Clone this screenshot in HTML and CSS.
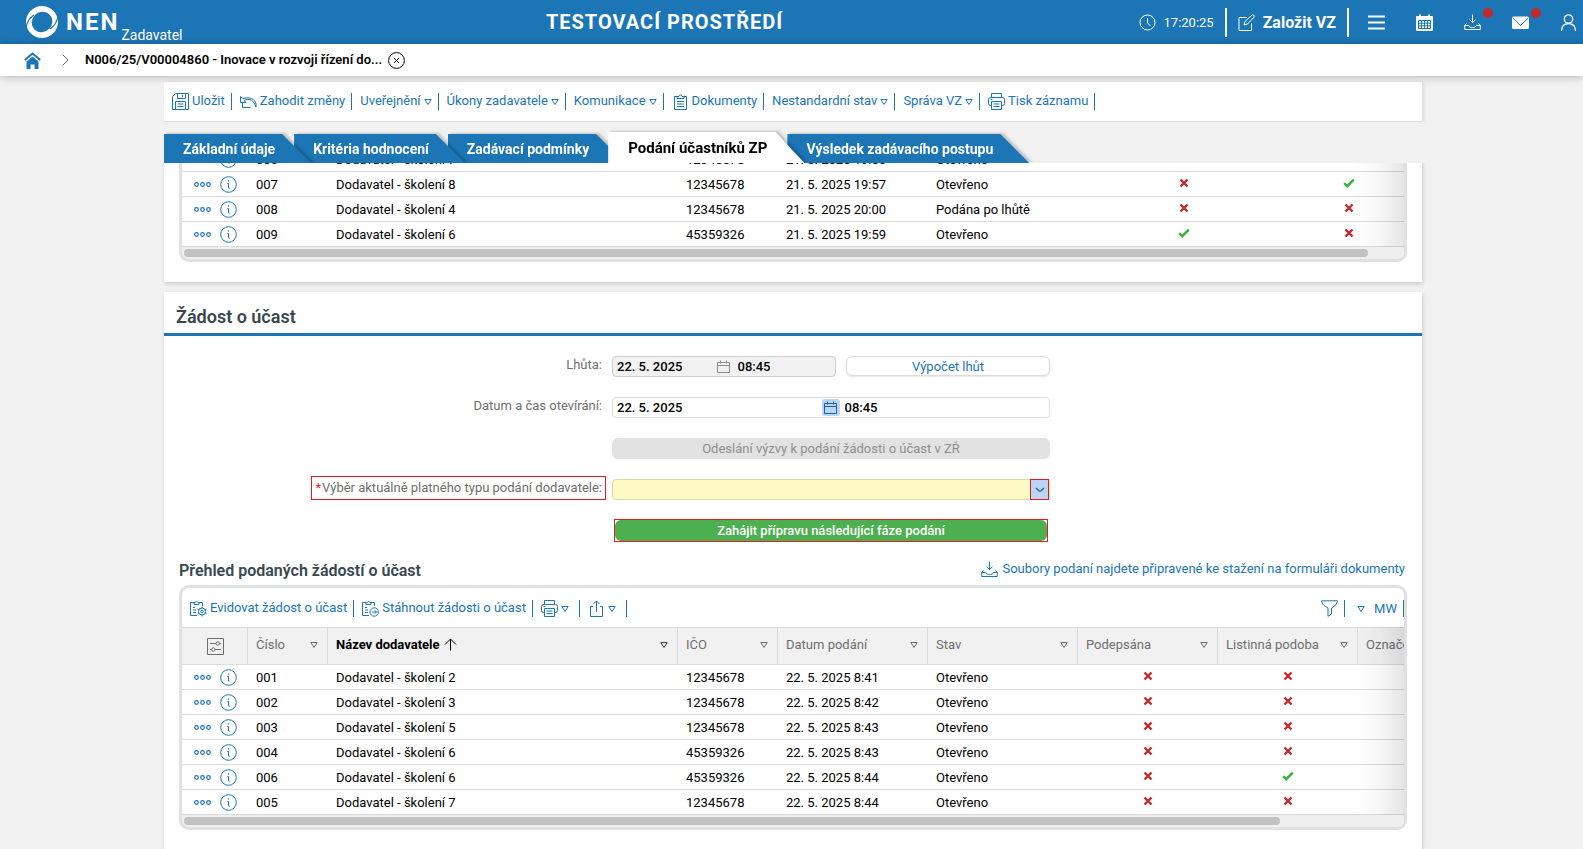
FILE: index.html
```html
<!DOCTYPE html>
<html lang="cs">
<head>
  <meta charset="UTF-8" />
  <meta name="viewport" content="width=device-width, initial-scale=1.0"/>
  <title>NEN Zadavatel</title>
  <link rel="stylesheet" href="styles.css">
</head>
<body>
  <!-- icons -->
  <svg class="sprite" width="0" height="0" aria-hidden="true">
    <symbol id="i-save" viewBox="0 0 17 17"><path d="M3.500.5h13v16H.5v-13zM5.500.5v5h8v-5M10.500 2v2M3.500 16.500v-8h10v8M5.500 11h6M5.500 13.500h6"/></symbol>
    <symbol id="i-undo" viewBox="0 0 17 17"><path d="M.5 3.500v6H6L4 7.500C9.500 4.500 14 7.500 16 14c1-6-4-11-13-8.500L.5 3.500zM2.500 9.500v5h8"/></symbol>
    <symbol id="i-clip" viewBox="0 0 17 17"><path d="M5 3.500H2.500v13h12v-13H12M5 5.500v-2h2a1.500 1.500 0 0 1 3 0h2v2zM5 8.500h7M5 11h7M5 13.500h7"/></symbol>
    <symbol id="i-print" viewBox="0 0 17 17"><path d="M3.500 4.500v-4h10v4M3.500 12.500h-1a2 2 0 0 1-2-2v-4a2 2 0 0 1 2-2h12a2 2 0 0 1 2 2v4a2 2 0 0 1-2 2h-1M3.500 8.500h10v8h-10zM5.500 11h6M5.500 13.500h6M2.500 6.500h2"/></symbol>
    <symbol id="i-tri" viewBox="0 0 8 8"><path d="M.8 1.500h6.400L4 6.500z"/></symbol>
    <symbol id="i-clipgear" viewBox="0 0 17 17"><path d="M7 15.500H.5v-13H4M9 2.500h3.500V6M4 4.500v-2h1.200a1.500 1.500 0 0 1 2.800 0h1v2zM3 7.500h2M3 10h3M3 12.500h3"/><circle cx="12" cy="11.500" r="3.500"/><circle cx="12" cy="11.500" r="1.300"/><path d="M12 6.500v1.500M12 15v1.500M7.500 9l1.500 1M15 13l1.500 1M7.500 14l1.500-1M15 10l1.500-1"/></symbol>
    <symbol id="i-cliparrow" viewBox="0 0 17 17"><path d="M7 15.500H.5v-13H4M9 2.500h3.500V6M4 4.500v-2h1.200a1.500 1.500 0 0 1 2.800 0h1v2zM3 7.500h2M3 10h3M3 12.500h3"/><circle cx="12.200" cy="12" r="4.200"/><path d="M10 12h4.500M12.800 10.200l1.800 1.800-1.800 1.800"/></symbol>
    <symbol id="i-share" viewBox="0 0 17 17"><path d="M5 6.500H2.500v10h12v-10H12M8.500 12V1M5.500 4l3-3 3 3"/></symbol>
    <symbol id="i-inbox" viewBox="0 0 17 17"><path d="M8.500.5v8M5.500 5.700l3 2.800 3-2.800M2.500 9.500L.7 11.500v4h15.600v-4l-1.800-2M.7 11.500h4c.5 2.700 7.100 2.700 7.600 0h4"/></symbol>
    <symbol id="i-funnel" viewBox="0 0 17 17"><path d="M.7.8h15.600c0 3-2 5-5.800 7.200v6L7 16.300V8C3.200 6 .7 4 .7.800z"/></symbol>
    <symbol id="i-cal" viewBox="0 0 13 13"><path d="M.5 2.500h12v10H.5zM.5 5.500h12M3.500.5v3M9.500.5v3"/></symbol>
    <symbol id="i-dots" viewBox="0 0 17 17"><g stroke-width="1.200"><circle cx="2.500" cy="8.500" r="1.800"/><circle cx="8.500" cy="8.500" r="1.800"/><circle cx="14.500" cy="8.500" r="1.800"/></g></symbol>
    <symbol id="i-info" viewBox="0 0 17 17"><circle cx="8.500" cy="8.500" r="7.800"/><path d="M8.500 4.300v1.200M7.300 7.500h1.200v4.300c0 .4.300.6 1.300.4"/></symbol>
    <symbol id="i-no" viewBox="0 0 10 10"><path d="M1.500 1.500l7 7M8.500 1.500l-7 7"/></symbol>
    <symbol id="i-yes" viewBox="0 0 12 10"><path d="M1.200 5.200l3 3L10.800 1.600"/></symbol>
    <symbol id="i-cols" viewBox="0 0 17 17"><path d="M.5.5h16v16H.5zM3 5.500h6M12.500 5.500H14M3 11.500h1.500M8 11.500h6"/><circle cx="10.800" cy="5.500" r="1.700"/><circle cx="6.300" cy="11.500" r="1.700"/></symbol>
    <symbol id="i-up" viewBox="0 0 13 13"><path d="M6.500 12.500V1M1 6.500L6.500 1 12 6.500"/></symbol>
  </svg>

  <header class="topbar">
    <a class="logo" href="#">
      <svg width="32" height="32" viewBox="0 0 32 32"><path fill="#fff" fill-rule="evenodd" d="M16 0a16 16 0 1 0 0 32 16 16 0 0 0 0-32zM23.500 8.500A10.600 10 -45 0 1 8.500 23.500 10.600 10 -45 0 1 23.500 8.500z"/><path fill="none" stroke="#1c75b4" stroke-width="1.200" d="M0 21.500c1-5 3.500-9.500 8-12.500M32 10.500c-1 5-3.500 9.500-8 12.500"/></svg>
      <span class="logo-name">NEN</span><span class="logo-role">Zadavatel</span>
    </a>
    <div class="env">TESTOVACÍ PROSTŘEDÍ</div>
    <div class="top-tools">
      <div class="clock">
        <svg width="17" height="17" viewBox="0 0 17 17"><circle cx="8.500" cy="8.500" r="7.500"/><path d="M8.500 4v5l3 3"/></svg>
        <span>17:20:25</span>
      </div>
      <a class="create" href="#">
        <svg width="17" height="17" viewBox="0 0 17 17"><path d="M9 3.500H1v13h12.500V9M6 11l1-3.500 7-6.500c1-.8 3 1 2 2.200L9.500 10z"/></svg>
        Založit VZ
      </a>
      <button class="top-btn" aria-label="Menu"><svg width="17" height="17" viewBox="0 0 17 17"><path stroke-width="2.200" d="M0 2.500h17M0 8.500h17M0 14.500h17"/></svg></button>
      <button class="top-btn" aria-label="Kalendář"><svg width="17" height="17" viewBox="0 0 17 17"><path fill="#fff" stroke="none" d="M1 2h2V.500h2V2h7V.500h2V2h2a1 1 0 0 1 1 1v13a1 1 0 0 1-1 1H1a1 1 0 0 1-1-1V3a1 1 0 0 1 1-1z"/><path stroke="#1c75b4" stroke-width="1" d="M2.500 6.500h12v8h-12zM5.500 6.500v8M8.500 6.500v8M11.500 6.500v8M2.500 9.200h12M2.500 11.800h12"/></svg></button>
      <button class="top-btn" aria-label="Stažené"><svg width="17" height="17"><use href="#i-inbox"/></svg><span class="badge"></span></button>
      <button class="top-btn" aria-label="Zprávy"><svg width="17" height="17" viewBox="0 0 17 17"><rect y="2.500" width="17" height="12.500" rx="1.500" fill="#fff" stroke="none"/><path stroke="#1c75b4" stroke-width="1" d="M.8 4l7.700 7.500L16.200 4"/></svg><span class="badge"></span></button>
      <button class="top-btn" aria-label="Uživatel"><svg width="17" height="17" viewBox="0 0 17 17"><g stroke-width="1.300"><circle cx="8.500" cy="5" r="4.200"/><path d="M1.500 17c0-5 2.500-7.300 7-7.300s7 2.300 7 7.300"/></g></svg></button>
    </div>
  </header>

  <nav class="crumbs">
    <a class="home" href="#" aria-label="Domů"><svg width="17" height="17" viewBox="0 0 17 17"><path fill="none" stroke="#1c75b4" stroke-width="2" d="M.8 8L8.500 1.500 16.200 8"/><path fill="#1c75b4" d="M8.500 4.500L14.500 9.500V17h-4v-4.500h-4V17h-4V9.500z"/></svg></a>
    <svg class="sep" width="7" height="12" viewBox="0 0 7 12"><path d="M.7.7L6 6 .7 11.300"/></svg>
    <a class="crumb" href="#">N006/25/V00004860 - Inovace v rozvoji řízení do...</a>
    <button class="crumb-close" aria-label="Zavřít"><svg width="17" height="17" viewBox="0 0 17 17"><circle cx="8.500" cy="8.500" r="7.900"/><path d="M6 6l5 5M11 6l-5 5"/></svg></button>
  </nav>

  <main>
    <div class="toolbar main-toolbar">
      <button><svg width="17" height="17"><use href="#i-save"/></svg>Uložit</button>
      <button><svg width="17" height="17"><use href="#i-undo"/></svg>Zahodit změny</button>
      <button>Uveřejnění<svg width="8" height="8"><use href="#i-tri"/></svg></button>
      <button>Úkony zadavatele<svg width="8" height="8"><use href="#i-tri"/></svg></button>
      <button>Komunikace<svg width="8" height="8"><use href="#i-tri"/></svg></button>
      <button><svg width="17" height="17"><use href="#i-clip"/></svg>Dokumenty</button>
      <button>Nestandardní stav<svg width="8" height="8"><use href="#i-tri"/></svg></button>
      <button>Správa VZ<svg width="8" height="8"><use href="#i-tri"/></svg></button>
      <button><svg width="17" height="17"><use href="#i-print"/></svg>Tisk záznamu</button>
    </div>

    <nav class="tabs">
      <a class="tab t1" href="#">Základní údaje</a>
      <a class="tab t2" href="#">Kritéria hodnocení</a>
      <a class="tab t3" href="#">Zadávací podmínky</a>
      <a class="tab active" href="#">Podání účastníků ZP</a>
      <a class="tab t5" href="#">Výsledek zadávacího postupu</a>
    </nav>

    <section class="panel panel-prev">
      <div class="grid-box">
        <div class="grid-body">
          <table class="grid">
            <colgroup><col class="c-act"><col class="c-num"><col class="c-name"><col class="c-ico"><col class="c-date"><col class="c-state-wide"><col class="c-flag-wide"><col class="c-flag-wide"></colgroup>
            <tbody>
              <tr><td class="act"><svg width="17" height="17"><use href="#i-dots"/></svg><svg width="17" height="17"><use href="#i-info"/></svg></td><td>006</td><td>Dodavatel - školení 7</td><td>12345678</td><td>21. 5. 2025 19:56</td><td>Otevřeno</td><td class="flag"></td><td class="flag"></td></tr>
              <tr><td class="act"><svg width="17" height="17"><use href="#i-dots"/></svg><svg width="17" height="17"><use href="#i-info"/></svg></td><td>007</td><td>Dodavatel - školení 8</td><td>12345678</td><td>21. 5. 2025 19:57</td><td>Otevřeno</td><td class="flag"><svg class="no"><use href="#i-no"/></svg></td><td class="flag"><svg class="yes"><use href="#i-yes"/></svg></td></tr>
              <tr><td class="act"><svg width="17" height="17"><use href="#i-dots"/></svg><svg width="17" height="17"><use href="#i-info"/></svg></td><td>008</td><td>Dodavatel - školení 4</td><td>12345678</td><td>21. 5. 2025 20:00</td><td>Podána po lhůtě</td><td class="flag"><svg class="no"><use href="#i-no"/></svg></td><td class="flag"><svg class="no"><use href="#i-no"/></svg></td></tr>
              <tr><td class="act"><svg width="17" height="17"><use href="#i-dots"/></svg><svg width="17" height="17"><use href="#i-info"/></svg></td><td>009</td><td>Dodavatel - školení 6</td><td>45359326</td><td>21. 5. 2025 19:59</td><td>Otevřeno</td><td class="flag"><svg class="yes"><use href="#i-yes"/></svg></td><td class="flag"><svg class="no"><use href="#i-no"/></svg></td></tr>
            </tbody>
          </table>
        </div>
        <div class="hscroll"><div class="thumb" style="width: 97.2%"></div></div>
      </div>
    </section>

    <section class="panel panel-req">
      <h2>Žádost o účast</h2>

      <form class="form">
        <label for="lhuta">Lhůta:</label>
        <div class="pair">
          <div class="field readonly">
            <input type="text" id="lhuta" value="22. 5. 2025" readonly>
            <button type="button" class="cal" aria-label="Kalendář"><svg width="13" height="13"><use href="#i-cal"/></svg></button>
            <input type="text" aria-label="Lhůta čas" value="08:45" readonly>
          </div>
          <button type="button" class="btn">Výpočet lhůt</button>
        </div>

        <label for="otevirani">Datum a čas otevírání:</label>
        <div class="field">
          <input type="text" id="otevirani" value="22. 5. 2025">
          <button type="button" class="cal cal-on" aria-label="Kalendář"><svg width="13" height="13"><use href="#i-cal"/></svg></button>
          <input type="text" aria-label="Čas otevírání" value="08:45">
        </div>

        <button type="button" class="btn btn-off" disabled>Odeslání výzvy k podání žádosti o účast v ZŘ</button>

        <label for="typ" class="marked"><span class="req">*</span>Výběr aktuálně platného typu podání dodavatele:</label>
        <div class="select">
          <select id="typ"><option value=""></option></select>
          <span class="arrow"><svg width="10" height="6" viewBox="0 0 10 6"><path stroke-width="1.300" d="M1 1l3 2.800q1 .8 2 0L9 1"/></svg></span>
        </div>

        <div class="go"><button type="button" class="btn-go">Zahájit přípravu následující fáze podání</button></div>
      </form>

      <div class="grid-head">
        <h3>Přehled podaných žádostí o účast</h3>
        <a href="#"><svg width="17" height="17"><use href="#i-inbox"/></svg>Soubory podaní najdete připravené ke stažení na formuláři dokumenty</a>
      </div>

      <div class="grid-box">
        <div class="toolbar grid-toolbar">
          <button><svg width="17" height="17"><use href="#i-clipgear"/></svg>Evidovat žádost o účast</button>
          <button><svg width="17" height="17"><use href="#i-cliparrow"/></svg>Stáhnout žádosti o účast</button>
          <button class="ico-btn" aria-label="Tisk"><svg width="17" height="17"><use href="#i-print"/></svg><svg width="8" height="8"><use href="#i-tri"/></svg></button>
          <button class="ico-btn" aria-label="Export"><svg width="17" height="17"><use href="#i-share"/></svg><svg width="8" height="8"><use href="#i-tri"/></svg></button>
          <button class="filter" aria-label="Filtr"><svg width="17" height="17"><use href="#i-funnel"/></svg></button>
          <button class="view"><svg width="8" height="8"><use href="#i-tri"/></svg>MW</button>
        </div>
        <div class="grid-body">
          <table class="grid">
            <colgroup><col class="c-act"><col class="c-num"><col class="c-name"><col class="c-ico"><col class="c-date"><col class="c-state"><col class="c-flag"><col class="c-flag"><col class="c-flag"></colgroup>
            <thead>
              <tr>
                <th class="cfg"><svg width="17" height="17"><use href="#i-cols"/></svg></th>
                <th><div>Číslo<svg width="8" height="8"><use href="#i-tri"/></svg></div></th>
                <th class="sorted"><div><span>Název dodavatele</span><svg width="13" height="13"><use href="#i-up"/></svg><svg width="8" height="8"><use href="#i-tri"/></svg></div></th>
                <th><div>IČO<svg width="8" height="8"><use href="#i-tri"/></svg></div></th>
                <th><div>Datum podání<svg width="8" height="8"><use href="#i-tri"/></svg></div></th>
                <th><div>Stav<svg width="8" height="8"><use href="#i-tri"/></svg></div></th>
                <th><div>Podepsána<svg width="8" height="8"><use href="#i-tri"/></svg></div></th>
                <th><div>Listinná podoba<svg width="8" height="8"><use href="#i-tri"/></svg></div></th>
                <th><div>Označení</div></th>
              </tr>
            </thead>
            <tbody>
              <tr><td class="act"><svg width="17" height="17"><use href="#i-dots"/></svg><svg width="17" height="17"><use href="#i-info"/></svg></td><td>001</td><td>Dodavatel - školení 2</td><td>12345678</td><td>22. 5. 2025 8:41</td><td>Otevřeno</td><td class="flag"><svg class="no"><use href="#i-no"/></svg></td><td class="flag"><svg class="no"><use href="#i-no"/></svg></td><td></td></tr>
              <tr><td class="act"><svg width="17" height="17"><use href="#i-dots"/></svg><svg width="17" height="17"><use href="#i-info"/></svg></td><td>002</td><td>Dodavatel - školení 3</td><td>12345678</td><td>22. 5. 2025 8:42</td><td>Otevřeno</td><td class="flag"><svg class="no"><use href="#i-no"/></svg></td><td class="flag"><svg class="no"><use href="#i-no"/></svg></td><td></td></tr>
              <tr><td class="act"><svg width="17" height="17"><use href="#i-dots"/></svg><svg width="17" height="17"><use href="#i-info"/></svg></td><td>003</td><td>Dodavatel - školení 5</td><td>12345678</td><td>22. 5. 2025 8:43</td><td>Otevřeno</td><td class="flag"><svg class="no"><use href="#i-no"/></svg></td><td class="flag"><svg class="no"><use href="#i-no"/></svg></td><td></td></tr>
              <tr><td class="act"><svg width="17" height="17"><use href="#i-dots"/></svg><svg width="17" height="17"><use href="#i-info"/></svg></td><td>004</td><td>Dodavatel - školení 6</td><td>45359326</td><td>22. 5. 2025 8:43</td><td>Otevřeno</td><td class="flag"><svg class="no"><use href="#i-no"/></svg></td><td class="flag"><svg class="no"><use href="#i-no"/></svg></td><td></td></tr>
              <tr><td class="act"><svg width="17" height="17"><use href="#i-dots"/></svg><svg width="17" height="17"><use href="#i-info"/></svg></td><td>006</td><td>Dodavatel - školení 6</td><td>45359326</td><td>22. 5. 2025 8:44</td><td>Otevřeno</td><td class="flag"><svg class="no"><use href="#i-no"/></svg></td><td class="flag"><svg class="yes"><use href="#i-yes"/></svg></td><td></td></tr>
              <tr><td class="act"><svg width="17" height="17"><use href="#i-dots"/></svg><svg width="17" height="17"><use href="#i-info"/></svg></td><td>005</td><td>Dodavatel - školení 7</td><td>12345678</td><td>22. 5. 2025 8:44</td><td>Otevřeno</td><td class="flag"><svg class="no"><use href="#i-no"/></svg></td><td class="flag"><svg class="no"><use href="#i-no"/></svg></td><td></td></tr>
            </tbody>
          </table>
        </div>
        <div class="hscroll"><div class="thumb" style="width: 90%"></div></div>
      </div>
    </section>
  </main>
</body>
</html>
```
FILE: styles.css
```css
* {
  box-sizing: border-box;
}

body {
  margin: 0;
  min-height: 100vh;
  display: flex;
  flex-direction: column;
  background: #f1f1f1;
  color: #000;
  font-family: Roboto, "Liberation Sans", sans-serif;
  font-size: 13px;
}

a {
  color: inherit;
  text-decoration: none;
}

button, input, select {
  font: inherit;
  color: inherit;
  margin: 0;
  padding: 0;
  border: none;
  background: none;
}

button {
  cursor: pointer;
}

svg {
  display: block;
  flex: none;
  fill: none;
  stroke: currentColor;
}

.sprite {
  position: absolute;
}

/* header */
.topbar {
  display: flex;
  justify-content: space-between;
  align-items: center;
  height: 44px;
  padding: 0 6px 0 26px;
  background: #1c75b4;
  color: #fff;
}

.logo {
  display: flex;
  align-items: center;
}

.logo svg {
  stroke: none;
}

.logo-name {
  margin-left: 8px;
  font-size: 24px;
  font-weight: 700;
  letter-spacing: 2px;
}

.logo-role {
  align-self: flex-end;
  margin: 0 0 -5px 2px;
  font-size: 14px;
}

.env {
  margin-left: 8px;
  font-size: 20px;
  font-weight: 700;
  letter-spacing: 1px;
}

.top-tools {
  display: flex;
  align-items: center;
}

.clock, .create {
  display: flex;
  align-items: center;
  height: 29px;
  border-right: 2px solid #fff;
}

.clock {
  gap: 8px;
  padding-right: 11px;
}

.create {
  gap: 8px;
  padding: 0 11px;
  font-size: 16px;
  font-weight: 700;
}

.top-btn {
  position: relative;
  padding: 6px 0;
  margin-left: 31px;
}

.create + .top-btn {
  margin-left: 19px;
}

.badge {
  position: absolute;
  top: 0;
  right: -12px;
  width: 10px;
  height: 10px;
  border-radius: 50%;
  background: #c62828;
}

/* breadcrumbs */
.crumbs {
  position: relative;
  z-index: 10;
  display: flex;
  align-items: center;
  height: 32px;
  padding: 0 24px;
  background: #fff;
  box-shadow: 0 1px 8px rgba(0, 0, 0, 0.25);
}

.home svg {
  stroke: none;
}

.sep {
  margin: 0 16px 0 21px;
  color: #666;
}

.crumb {
  font-weight: 600;
  line-height: 17px;
  padding-bottom: 2px;
}

.crumb-close {
  margin-left: 6px;
}

main {
  flex: 1;
  display: flex;
  flex-direction: column;
  width: 100%;
  max-width: 1261px;
  margin: 0 auto;
  padding: 6px 0 0 3px;
}

/* toolbars */
.toolbar {
  display: flex;
  align-items: center;
  color: #1c75b4;
}

.toolbar button {
  display: flex;
  align-items: center;
  gap: 3px;
  height: 17px;
  padding: 0 6px 2px 8px;
  border-right: 1px solid #1c75b4;
  white-space: nowrap;
}

.toolbar svg {
  margin-top: 2px;
}

.main-toolbar {
  height: 40px;
  background: #fff;
  border-bottom: 1px solid #dcdcdc;
  box-shadow: 2px 0 3px rgba(0, 0, 0, 0.08);
}

.grid-toolbar {
  height: 39px;
  padding-top: 2px;
}

.toolbar .ico-btn {
  padding-right: 10px;
}

.toolbar .filter {
  margin-left: auto;
}

.toolbar .view {
  gap: 9px;
  padding: 0 6px 0 12px;
}

.toolbar .view svg {
  margin-top: 0;
}

/* tabs */
.tabs {
  position: relative;
  z-index: 2;
  display: flex;
  align-items: flex-end;
  height: 41px;
  overflow: hidden;
  background: #f1f1f1;
}

.tab {
  position: relative;
  padding: 2px 19px 0;
  color: #fff;
  font-size: 14px;
  font-weight: 700;
  line-height: 27px;
  white-space: nowrap;
  filter: drop-shadow(3px -1px 1px rgba(0, 0, 0, 0.18));
}

.tab::before {
  content: "";
  position: absolute;
  z-index: -1;
  inset: 0 -17px 0 0;
  background: #1c75b4;
  clip-path: polygon(0 0, calc(100% - 29px) 0, 100% 100%, 0 100%);
}

.t1 { z-index: 4; }
.t2 { z-index: 3; }
.t3 { z-index: 2; }
.t5 { z-index: 1; }

.tab.active {
  z-index: 5;
  padding: 2px 20px 0;
  color: #000;
  font-size: 15px;
  line-height: 29px;
}

.tab.active::before {
  background: #fff;
}

/* panels */
.panel {
  background: #fff;
  box-shadow: 1px 2px 4px rgba(0, 0, 0, 0.15);
}

/* the list is scrolled under the tabs */
.panel-prev {
  margin-top: -16px;
  padding: 0 15px 20px;
  clip-path: inset(16px -8px -8px -8px);
}

.panel-prev .grid-box {
  border-top: none;
  border-radius: 0 0 10px 10px;
}

.panel-req {
  flex: 1;
  margin-top: 10px;
  padding-bottom: 19px;
}

h2 {
  margin: 0;
  padding: 8px 12px 0;
  border-bottom: 3px solid #1c75b4;
  color: #37474f;
  font-size: 18px;
  font-weight: 600;
  line-height: 33px;
}

/* form */
.form {
  display: grid;
  grid-template-columns: minmax(0, 448fr) 438px minmax(0, 372fr);
  grid-auto-rows: 24px;
  row-gap: 17px;
  align-items: end;
  padding-top: 17px;
}

.form label {
  grid-column: 1;
  justify-self: end;
  margin-right: 6px;
  padding: 0 3px;
  border: 1px solid transparent;
  color: #6e6e6e;
  line-height: 22px;
  white-space: nowrap;
}

.form label.marked {
  border-color: #e31b23;
}

.req {
  margin-right: 1px;
  color: #e31b23;
}

.pair, .field, .select, .btn-off, .go {
  grid-column: 2;
}

.pair {
  display: flex;
  gap: 10px;
}

.pair .field {
  flex: 1;
  min-width: 0;
}

.field {
  display: flex;
  align-items: center;
  height: 21px;
  border: 1px solid #dcdcdc;
  border-radius: 4px;
  background: #fff;
}

.field.readonly {
  border-color: #cfcfcf;
  background: #f1f1f1;
}

.field input {
  flex: 1;
  min-width: 0;
  padding: 0 4px;
  font-weight: 500;
}

.field .cal + input {
  padding-left: 5px;
}

.cal {
  display: grid;
  place-items: center;
  width: 18px;
  height: 17px;
  border-radius: 3px;
  color: #8e8e8e;
}

.cal-on {
  background: #bbd6f5;
  color: #1c62a8;
}

.btn {
  height: 20px;
  border: 1px solid #dcdcdc;
  border-radius: 6px;
  background: #fff;
  color: #1c75b4;
  box-shadow: 0 1px 2px rgba(0, 0, 0, 0.1);
}

.pair .btn {
  flex: none;
  width: 204px;
}

.form .btn-off {
  height: 21px;
  border: none;
  background: #e2e2e2;
  box-shadow: none;
  color: #8e8e8e;
}

.select {
  position: relative;
  height: 21px;
}

.select select {
  display: block;
  width: 100%;
  height: 21px;
  border: 1px solid #ddd6a8;
  border-radius: 4px;
  background: #fff9c4;
  appearance: none;
}

.arrow {
  position: absolute;
  top: 0;
  right: 1px;
  display: grid;
  place-items: center;
  width: 19px;
  height: 21px;
  border: 1px solid #e31b23;
  background: #bbd6f5;
  color: #1c62a8;
  pointer-events: none;
}

.go {
  align-self: start;
  margin: 2px 2px 0;
  border: 1px solid #e31b23;
}

.btn-go {
  display: block;
  width: 100%;
  height: 21px;
  border-radius: 6px;
  background: #4caf50;
  color: #fff;
  font-weight: 500;
}

/* grids */
.grid-head {
  display: flex;
  justify-content: space-between;
  align-items: flex-start;
  height: 44px;
  padding: 18px 17px 0 15px;
}

h3 {
  margin: 0;
  color: #37474f;
  font-size: 16px;
  font-weight: 600;
  line-height: 24px;
}

.grid-head a {
  display: flex;
  align-items: center;
  gap: 4px;
  color: #1c75b4;
  line-height: 20px;
}

.grid-box {
  overflow: hidden;
  border: 3px solid #dee0e1;
  border-radius: 10px;
}

.panel-req .grid-box {
  margin: 0 15px;
}

.grid-body {
  position: relative;
  overflow: hidden;
}

.grid-body::after {
  content: "";
  position: absolute;
  inset: 0 0 0 auto;
  width: 50px;
  background: linear-gradient(to right, rgba(0, 0, 0, 0), rgba(0, 0, 0, 0.03) 50%, rgba(0, 0, 0, 0.1));
}

.grid {
  width: 0;
  table-layout: fixed;
  border-collapse: separate;
  border-spacing: 0;
}

.c-act { width: 66px; }
.c-num { width: 80px; }
.c-name { width: 350px; }
.c-ico { width: 100px; }
.c-date { width: 150px; }
.c-state { width: 150px; }
.c-state-wide { width: 173px; }
.c-flag { width: 140px; }
.c-flag-wide { width: 165px; }

.grid td {
  height: 25px;
  padding: 1px 8px 0;
  border-bottom: 1px solid #dcdcdc;
  white-space: nowrap;
}

.grid th {
  height: 38px;
  padding: 0 9px 3px 8px;
  border: 1px solid #dcdcdc;
  border-width: 1px 1px 1px 0;
  background: #f1f1f1;
  color: #6e6e6e;
  font-weight: 400;
  text-align: left;
}

.grid th div {
  display: flex;
  align-items: center;
}

.grid th div svg:last-child {
  margin-left: auto;
}

.grid th.sorted {
  color: #000;
  font-weight: 700;
}

.sorted span {
  margin-right: 4px;
}

.sorted svg:last-child {
  color: #444;
}

.grid .cfg {
  padding: 0 0 0 25px;
}

.grid .act {
  padding: 0 0 0 12px;
  color: #1c75b4;
}

.act svg {
  display: inline-block;
  vertical-align: middle;
  margin-right: 9px;
}

.act svg + svg {
  margin-right: 0;
}

.flag svg {
  width: 10px;
  height: 10px;
  margin: -3px auto 0;
  stroke-width: 2.4;
}

.flag .no {
  color: #c62828;
}

.flag .yes {
  width: 12px;
  color: #35b535;
}

.hscroll {
  height: 12px;
  padding: 2px;
  background: #efefef;
}

.thumb {
  height: 8px;
  border-radius: 4px;
  background: #c1c1c1;
}
```
